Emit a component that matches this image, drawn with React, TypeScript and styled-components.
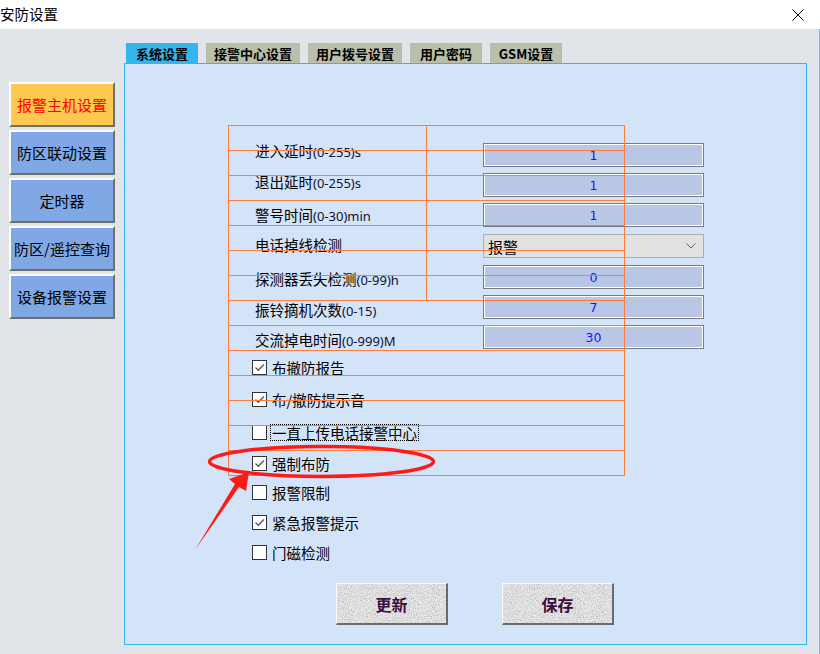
import styled, { createGlobalStyle } from "styled-components";

const GlobalStyle = createGlobalStyle`
  html, body {
    margin: 0;
    padding: 0;
    background: #e1e4e9;
  }
  body {
    font-family: "Noto Sans CJK SC", "Noto Sans", sans-serif;
  }
`;

const ORANGE = "#ff7d3a";

interface BgProp {
  bg: string;
  fg?: string;
}

interface TabProp {
  active?: boolean;
  w: number;
}

interface HeightProp {
  h: number;
}

const Window = styled.div`
  position: relative;
  width: 820px;
  height: 654px;
  overflow: hidden;
  background: #e1e4e9;
`;

const TitleBar = styled.div`
  height: 29px;
  background: #fff;
  display: flex;
  align-items: center;
  justify-content: space-between;
  padding-right: 16px;
`;

const TitleText = styled.span`
  font-size: 14.5px;
  line-height: 1;
  color: #000;
`;

const Body = styled.div`
  display: flex;
  height: 625px;
  border-right: 1px solid #8fa9c9;
  box-sizing: border-box;
`;

const Sidebar = styled.div`
  width: 124px;
  box-sizing: border-box;
  padding: 53px 0 0 9px;
  display: flex;
  flex-direction: column;
  gap: 3px;
`;

const MenuButton = styled.div<BgProp>`
  width: 106px;
  height: 45px;
  box-sizing: border-box;
  background: ${(props) => props.bg};
  color: ${(props) => props.fg || "#000"};
  border-top: 2px solid #fff;
  border-left: 2px solid #fff;
  border-right: 2px solid #707070;
  border-bottom: 2px solid #707070;
  display: flex;
  align-items: center;
  justify-content: center;
  font-size: 15px;
  line-height: 1;
  white-space: nowrap;
`;

const Main = styled.div`
  display: flex;
  flex-direction: column;
  padding-top: 14px;
`;

const Tabs = styled.div`
  display: flex;
  gap: 8px;
  padding-left: 2px;
  height: 20px;
`;

const Tab = styled.div<TabProp>`
  width: ${(props) => props.w}px;
  height: 20px;
  background: ${(props) => (props.active ? "#33b5ee" : "#babfab")};
  display: flex;
  align-items: center;
  justify-content: center;
  font-size: 13px;
  font-weight: bold;
  line-height: 1;
  color: #000;
`;

const Panel = styled.div`
  position: relative;
  width: 683px;
  height: 582px;
  box-sizing: border-box;
  border: 1px solid #33b5ee;
  background: #d4e4f8;
`;

const Form = styled.div`
  padding: 76px 0 0 130px;
  display: flex;
  flex-direction: column;
`;

const FieldRow = styled.div<HeightProp>`
  display: grid;
  grid-template-columns: 228px 221px;
  height: ${(props) => props.h}px;
  align-items: center;
`;

const FieldLabel = styled.span<{ pad: number }>`
  align-self: start;
  padding-top: ${(props) => props.pad}px;
  font-size: 14.5px;
  line-height: 15px;
  color: #000;
  white-space: nowrap;
`;

const Unit = styled.span`
  font-family: "Noto Sans", "Open Sans", sans-serif;
  font-size: 13px;
  color: #101030;
`;

const NumberBox = styled.div`
  height: 24px;
  box-sizing: border-box;
  border: 1px solid #7a7a7a;
  box-shadow: inset 0 0 0 1px #fff;
  background: #bac6e6;
  color: #1414ff;
  font-family: "DejaVu Sans", "Liberation Sans", sans-serif;
  font-size: 12.5px;
  display: flex;
  align-items: center;
  justify-content: center;
`;

const SelectBox = styled.div`
  height: 24px;
  box-sizing: border-box;
  border: 1px solid #adadad;
  background: #e1e1e1;
  display: flex;
  align-items: center;
  justify-content: space-between;
  padding: 0 7px 0 4px;
  font-size: 15px;
  line-height: 1;
  color: #000;
`;

const CheckList = styled.div`
  margin-left: -3px;
  display: flex;
  flex-direction: column;
`;

const CheckRow = styled.div<HeightProp>`
  height: ${(props) => props.h}px;
  display: flex;
  align-items: center;
`;

const Box = styled.div`
  width: 15px;
  height: 15px;
  box-sizing: border-box;
  border: 1px solid #333;
  background: #fff;
  display: flex;
  align-items: center;
  justify-content: center;
`;

const CheckText = styled.span<{ focus?: boolean }>`
  margin-left: 3px;
  padding: 0 1px;
  border: 1px ${(props) => (props.focus ? "dotted #000" : "solid transparent")};
  font-size: 14.5px;
  line-height: 15px;
  color: #000;
  white-space: nowrap;
`;

const ButtonRow = styled.div`
  display: flex;
  gap: 54px;
  margin-top: 16px;
  padding-left: 81px;
`;

const ActionButton = styled.div`
  position: relative;
  width: 112px;
  height: 42px;
  box-sizing: border-box;
  background: #e8e8e8;
  border-top: 1px solid #fafafa;
  border-left: 1px solid #fafafa;
  border-right: 2px solid #6a6a6a;
  border-bottom: 2px solid #6a6a6a;
  overflow: hidden;
  display: flex;
  align-items: center;
  justify-content: center;
`;

const ButtonText = styled.span`
  position: relative;
  font-size: 16px;
  font-weight: bold;
  line-height: 1;
  color: #3b0d3d;
`;

const Noise = styled.svg`
  position: absolute;
  inset: 0;
`;

const OrangeGrid = styled.div`
  position: absolute;
  left: 103px;
  top: 61px;
  width: 397px;
  box-sizing: border-box;
  border: 1px solid ${ORANGE};
  border-bottom: none;
  pointer-events: none;
`;

const GridRow = styled.div`
  height: 25px;
  box-sizing: border-box;
  border-bottom: 1px solid ${ORANGE};
  display: flex;
`;

const GridCell = styled.div<{ split?: boolean }>`
  width: 198px;
  box-sizing: border-box;
  border-right: ${(props) => (props.split ? `1px solid ${ORANGE}` : "none")};
`;

const Annotation = styled.svg`
  position: absolute;
  left: 0;
  top: 0;
  pointer-events: none;
`;

const menu = [
  { text: "报警主机设置", bg: "#fec850", fg: "#ff0000" },
  { text: "防区联动设置", bg: "#7fa8e4" },
  { text: "定时器", bg: "#7fa8e4" },
  { text: "防区/遥控查询", bg: "#7fa8e4" },
  { text: "设备报警设置", bg: "#7fa8e4" },
];

const tabs = [
  { text: "系统设置", w: 72 },
  { text: "接警中心设置", w: 94 },
  { text: "用户拨号设置", w: 94 },
  { text: "用户密码", w: 72 },
  { text: "GSM设置", w: 72 },
];

// pad: where the label sits inside its row (labels drift a little against the inputs)
const fields = [
  { label: "进入延时", unit: "(0-255)s", value: "1", pad: 3 },
  { label: "退出延时", unit: "(0-255)s", value: "1", pad: 4 },
  { label: "警号时间", unit: "(0-30)min", value: "1", pad: 7 },
  { label: "电话掉线检测", unit: "", value: "报警", select: true, pad: 7 },
  { label: "探测器丢失检测", unit: "(0-99)h", value: "0", pad: 9 },
  { label: "振铃摘机次数", unit: "(0-15)", value: "7", pad: 10 },
  { label: "交流掉电时间", unit: "(0-999)M", value: "30", pad: 10 },
];

const checks = [
  { text: "布撤防报告", checked: true, h: 31 },
  { text: "布/撤防提示音", checked: true, h: 33 },
  { text: "一直上传电话接警中心", checked: false, h: 32, focus: true },
  { text: "强制布防", checked: true, h: 30 },
  { text: "报警限制", checked: false, h: 29 },
  { text: "紧急报警提示", checked: true, h: 30 },
  { text: "门磁检测", checked: false, h: 30 },
];

const NoiseTexture = ({ id }: { id: string }) => (
  <Noise width="100%" height="100%">
    <filter id={id}>
      <feTurbulence type="fractalNoise" baseFrequency="0.95" numOctaves="2" stitchTiles="stitch" />
      <feColorMatrix type="matrix" values="0 0 0 0 0.5  0 0 0 0 0.5  0 0 0 0 0.5  2.8 0 0 0 -1.2" />
    </filter>
    <rect width="100%" height="100%" filter={`url(#${id})`} />
  </Noise>
);

const App = () => {
  return (
    <>
      <GlobalStyle />
      <Window>
        <TitleBar>
          <TitleText>安防设置</TitleText>
          <svg width="12" height="12" viewBox="0 0 12 12">
            <path d="M0.5 0.5 L11.5 11.5 M11.5 0.5 L0.5 11.5" stroke="#000" strokeWidth="1" />
          </svg>
        </TitleBar>
        <Body>
          <Sidebar>
            {menu.map((item) => (
              <MenuButton key={item.text} bg={item.bg} fg={item.fg}>
                {item.text}
              </MenuButton>
            ))}
          </Sidebar>
          <Main>
            <Tabs>
              {tabs.map((tab, index) => (
                <Tab key={tab.text} w={tab.w} active={index === 0}>
                  {tab.text}
                </Tab>
              ))}
            </Tabs>
            <Panel>
              <Form>
                {fields.map((field) => (
                  <FieldRow key={field.label} h={field.select ? 32 : 30}>
                    <FieldLabel pad={field.pad}>
                      {field.label}
                      {field.unit && <Unit>{field.unit}</Unit>}
                    </FieldLabel>
                    {field.select ? (
                      <SelectBox>
                        {field.value}
                        <svg width="10" height="6" viewBox="0 0 10 6">
                          <path d="M0.5 0.5 L5 5 L9.5 0.5" fill="none" stroke="#666" strokeWidth="1" />
                        </svg>
                      </SelectBox>
                    ) : (
                      <NumberBox>{field.value}</NumberBox>
                    )}
                  </FieldRow>
                ))}
                <CheckList>
                  {checks.map((item) => (
                    <CheckRow key={item.text} h={item.h}>
                      <Box>
                        {item.checked && (
                          <svg width="11" height="11" viewBox="0 0 11 11">
                            <path d="M1.5 5.5 L4.3 8.3 L9.8 2.5" fill="none" stroke="#555" strokeWidth="1.3" />
                          </svg>
                        )}
                      </Box>
                      <CheckText focus={item.focus}>{item.text}</CheckText>
                    </CheckRow>
                  ))}
                </CheckList>
                <ButtonRow>
                  <ActionButton>
                    <NoiseTexture id="noise-a" />
                    <ButtonText>更新</ButtonText>
                  </ActionButton>
                  <ActionButton>
                    <NoiseTexture id="noise-b" />
                    <ButtonText>保存</ButtonText>
                  </ActionButton>
                </ButtonRow>
              </Form>
              <OrangeGrid>
                {Array.from({ length: 14 }).map((_, index) => (
                  <GridRow key={index}>
                    <GridCell split={index < 7} />
                  </GridRow>
                ))}
              </OrangeGrid>
            </Panel>
          </Main>
        </Body>
        <Annotation width="820" height="654" viewBox="0 0 820 654">
          <ellipse cx="321.5" cy="461.5" rx="112" ry="15" fill="none" stroke="#ff1a1a" strokeWidth="3.5" />
          <polygon points="195,550 235,484 229,479 249,472 246,491 239,487" fill="#ff1a1a" />
        </Annotation>
      </Window>
    </>
  );
};

export default App;
